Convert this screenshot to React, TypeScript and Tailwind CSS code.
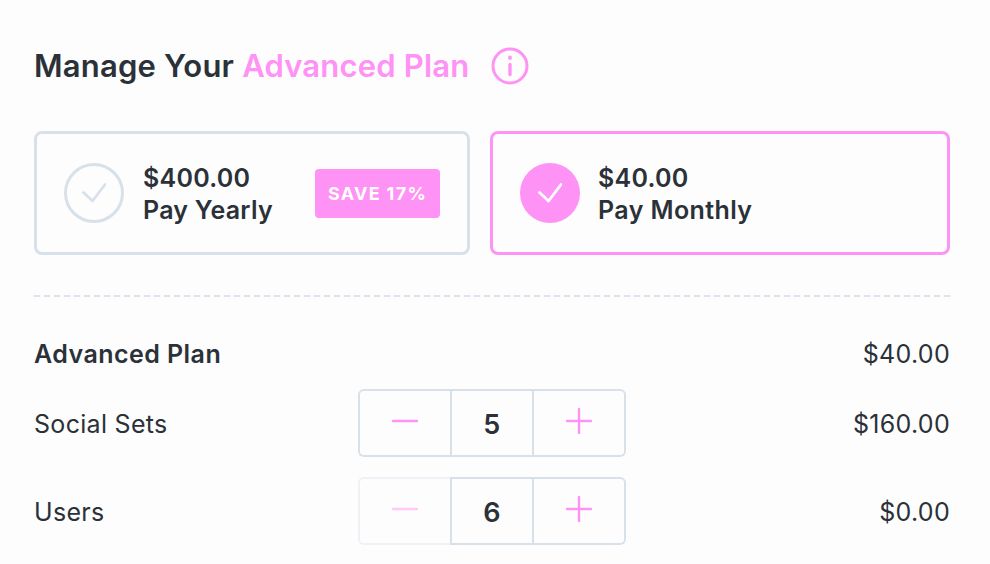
const pink = "#ff92f5"

function Check({ className }: { className: string }) {
  return (
    <svg viewBox="0 0 24 24" className={className} fill="none" stroke="currentColor" strokeWidth="2.8" strokeLinecap="round" strokeLinejoin="round">
      <path d="M1.5 11.5 L10.5 20 L23 3.5" />
    </svg>
  )
}

function Stepper({ value, faded }: { value: number; faded?: boolean }) {
  return (
    <div className="flex h-[68px] w-[268px] text-[#ff92f5]">
      <div className={`flex w-[92px] items-center justify-center rounded-l-[6px] border-2 border-r-0 ${faded ? "border-[#eef1f6] text-[#ffc9fa]" : "border-[#d8e1ea]"}`}>
        <svg width="26" height="26" viewBox="0 0 26 26" className="-mt-[4px]" stroke="currentColor" strokeWidth="2.4" strokeLinecap="round">
          <path d="M1 13h24" />
        </svg>
      </div>
      <div className="flex w-[84px] items-center justify-center border-2 border-[#d8e1ea] pt-[4px] text-[27px] font-semibold text-[#2b3138]">
        {value}
      </div>
      <div className="flex flex-1 items-center justify-center rounded-r-[6px] border-2 border-l-0 border-[#d8e1ea]">
        <svg width="26" height="26" viewBox="0 0 26 26" className="-mt-[4px]" stroke="currentColor" strokeWidth="2.4" strokeLinecap="round">
          <path d="M1 13h24M13 1v24" />
        </svg>
      </div>
    </div>
  )
}

export default function App() {
  return (
    <div className="h-[564px] w-[990px] overflow-hidden bg-[#fdfdfd] pl-[34px] pr-[40px] pt-[44px] text-[#2b3138]" style={{ fontFamily: "Inter, sans-serif" }}>
      <div className="flex h-[44px] items-center">
        <h1 className="text-[31px] font-semibold leading-[44px] tracking-[0.2px]">
          Manage Your <span className="text-[#ff92f5]">Advanced Plan</span>
        </h1>
        <svg width="38" height="38" viewBox="0 0 38 38" className="ml-[21px] -mt-[1px]" fill="none" stroke={pink} strokeWidth="3" strokeLinecap="round">
          <circle cx="19" cy="19" r="17" />
          <path d="M19 17.5v10" strokeWidth="3.4" />
          <path d="M19 10.5v.5" strokeWidth="3.8" />
        </svg>
      </div>

      <div className="mt-[43px] flex gap-[20px]">
        <div className="flex h-[124px] w-[436px] items-center rounded-[8px] border-[3px] border-[#d8e1ea] pl-[27px] pr-[27px]">
          <div className="flex h-[60px] w-[60px] items-center justify-center rounded-full border-[3px] border-[#d8e1ea] text-[#d8e1ea]">
            <Check className="h-[24px] w-[24px]" />
          </div>
          <div className="ml-[19px] pt-[2px] text-[25px] font-semibold leading-[32px] tracking-[0.25px]">
            <div>$400.00</div>
            <div>Pay Yearly</div>
          </div>
          <div className="ml-auto flex h-[49px] w-[125px] items-center justify-center rounded-[4px] bg-[#ff92f5] text-[18px] font-bold tracking-[1.3px] text-white">
            SAVE 17%
          </div>
        </div>
        <div className="flex h-[124px] flex-1 items-center rounded-[8px] border-[3px] border-[#ff92f5] pl-[27px]">
          <div className="flex h-[60px] w-[60px] items-center justify-center rounded-full bg-[#ff92f5] text-white">
            <Check className="h-[24px] w-[24px]" />
          </div>
          <div className="ml-[18px] pt-[2px] text-[25px] font-semibold leading-[32px] tracking-[0.25px]">
            <div>$40.00</div>
            <div className="tracking-[0.4px]">Pay Monthly</div>
          </div>
        </div>
      </div>

      <div className="mt-[40px] border-t-2 border-dashed border-[#dde3ec]" />

      <div className="mt-[42px] flex h-[32px] items-center justify-between text-[25px] tracking-[0.3px]">
        <span className="font-semibold tracking-[0.45px]">Advanced Plan</span>
        <span>$40.00</span>
      </div>

      <div className="mt-[18px] flex items-center text-[25px] tracking-[0.3px]">
        <span className="w-[324px] pt-[4px]">Social Sets</span>
        <Stepper value={5} />
        <span className="ml-auto pt-[4px]">$160.00</span>
      </div>

      <div className="mt-[20px] flex items-center text-[25px] tracking-[0.3px]">
        <span className="w-[324px] pt-[4px]">Users</span>
        <Stepper value={6} faded />
        <span className="ml-auto pt-[4px]">$0.00</span>
      </div>
    </div>
  )
}
